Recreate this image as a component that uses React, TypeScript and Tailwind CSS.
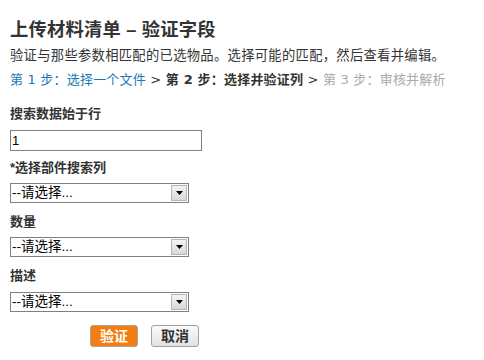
const font = "font-['Liberation_Sans','Noto_Sans_CJK_SC',sans-serif]";

function FakeSelect() {
  return (
    <div className="flex h-[20px] w-[179px] items-stretch border border-[#7f7f7f] bg-white">
      <div className="flex flex-1 items-center pl-[1px] text-[13.5px] leading-none text-black">
        --请选择...
      </div>
      <div className="m-[1px] flex w-[16px] items-center justify-center border border-[#b5b5b5] bg-gradient-to-b from-[#f4f4f4] to-[#d8d8d8]">
        <svg width="7" height="4" viewBox="0 0 7 4">
          <polygon points="0,0 7,0 3.5,4" fill="#000" />
        </svg>
      </div>
    </div>
  );
}

function Label({ children, className = "" }: { children: React.ReactNode; className?: string }) {
  return (
    <div className={`text-[13px] font-bold leading-[18px] text-[#333] ${className}`}>
      {children}
    </div>
  );
}

export default function App() {
  return (
    <div className={`h-[360px] w-[484px] bg-white px-[10px] pt-[18px] ${font}`}>
      <h1 className="text-[18.3px] font-bold leading-[24px] tracking-[0.2px] text-[#333]">
        上传材料清单 – 验证字段
      </h1>
      <p className="mt-[5px] text-[13.3px] leading-[18px] tracking-[0.3px] text-[#333]">
        验证与那些参数相匹配的已选物品。选择可能的匹配，然后查看并编辑。
      </p>
      <div className="mt-[6px] whitespace-nowrap font-['DejaVu_Sans','Noto_Sans_CJK_SC',sans-serif] text-[13px] leading-[18px] tracking-[0.2px]">
        <span className="text-[#1a79b5]">第 1 步：选择一个文件</span>
        <span className="text-[#333]"> &gt; </span>
        <span className="font-bold text-[#333]">第 2 步：选择并验证列</span>
        <span className="text-[#333]"> &gt; </span>
        <span className="text-[#aaa]">第 3 步：审核并解析</span>
      </div>

      <Label className="mt-[16px]">搜索数据始于行</Label>
      <div className="mt-[7px] flex h-[21px] w-[192px] items-center border border-[#808080] bg-white pl-[1px] text-[13px] text-black">
        1
      </div>

      <Label className="mt-[8px]">*选择部件搜索列</Label>
      <div className="mt-[6px]">
        <FakeSelect />
      </div>

      <Label className="mt-[10px]">数量</Label>
      <div className="mt-[6px]">
        <FakeSelect />
      </div>

      <Label className="mt-[10px]">描述</Label>
      <div className="mt-[7px]">
        <FakeSelect />
      </div>

      <div className="ml-[80px] mt-[13px] flex gap-[13px]">
        <button className="h-[22px] w-[48px] rounded-[3px] border border-[#a8a8a8] bg-[#f47d0e] text-[14px] font-bold leading-none text-white">
          验证
        </button>
        <button className="h-[22px] w-[48px] rounded-[3px] border border-[#a0a0a0] bg-gradient-to-b from-[#fbfbfb] to-[#e2e2e2] text-[14px] font-bold leading-none text-[#333]">
          取消
        </button>
      </div>
    </div>
  );
}
